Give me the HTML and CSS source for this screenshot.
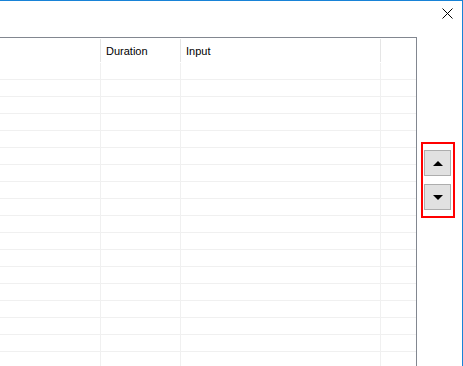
FILE: index.html
```html
<!DOCTYPE html>
<html lang="en">
<head>
    <meta charset="UTF-8">
    <title>Steps</title>
    <link rel="stylesheet" href="styles.css">
</head>
<body>
    <div class="window">
        <div class="main">
            <div class="titlebar">
                <svg class="close" width="11" height="11" viewBox="0 0 11 11">
                    <path d="M0.5 0.5 L10.5 10.5 M10.5 0.5 L0.5 10.5" stroke="#000" stroke-width="1" fill="none"/>
                </svg>
            </div>
            <div class="content">
                <div class="grid">
                    <div class="head">
                        <div class="cell"></div>
                        <div class="cell">Duration</div>
                        <div class="cell">Input</div>
                        <div class="cell"></div>
                    </div>
                    <div class="row"><div></div><div></div><div></div><div></div></div>
                    <div class="row"><div></div><div></div><div></div><div></div></div>
                    <div class="row"><div></div><div></div><div></div><div></div></div>
                    <div class="row"><div></div><div></div><div></div><div></div></div>
                    <div class="row"><div></div><div></div><div></div><div></div></div>
                    <div class="row"><div></div><div></div><div></div><div></div></div>
                    <div class="row"><div></div><div></div><div></div><div></div></div>
                    <div class="row"><div></div><div></div><div></div><div></div></div>
                    <div class="row"><div></div><div></div><div></div><div></div></div>
                    <div class="row"><div></div><div></div><div></div><div></div></div>
                    <div class="row"><div></div><div></div><div></div><div></div></div>
                    <div class="row"><div></div><div></div><div></div><div></div></div>
                    <div class="row"><div></div><div></div><div></div><div></div></div>
                    <div class="row"><div></div><div></div><div></div><div></div></div>
                    <div class="row"><div></div><div></div><div></div><div></div></div>
                    <div class="row"><div></div><div></div><div></div><div></div></div>
                    <div class="row"><div></div><div></div><div></div><div></div></div>
                    <div class="row"><div></div><div></div><div></div><div></div></div>
                </div>
                <div class="side">
                    <div class="movers">
                        <button class="move"><span class="tri up"></span></button>
                        <button class="move"><span class="tri down"></span></button>
                    </div>
                </div>
            </div>
        </div>
    </div>
</body>
</html>
```

FILE: styles.css
```css
* {
    box-sizing: border-box;
}

body {
    margin: 0;
    background: #fff;
    font-family: 'Liberation Sans', Arial, sans-serif;
    font-size: 11px;
    color: #000;
    overflow: hidden;
}

.window {
    width: 463px;
    height: 366px;
    border-top: 1px solid #1883d7;
    border-right: 1px solid #1883d7;
    overflow: hidden;
}

.titlebar {
    height: 36px;
    display: flex;
    justify-content: flex-end;
    padding: 7px 9px 0 0;
}

.close {
    display: block;
}

.content {
    display: flex;
    height: 329px;
}

/* list view */
.grid {
    width: 417px;
    flex: none;
    border-top: 1px solid #828790;
    border-right: 1px solid #828790;
    overflow: hidden;
}

.head,
.row {
    display: grid;
    grid-template-columns: 101px 80px 200px 35px;
}

.head {
    height: 25px;
}

.head .cell {
    margin: 1px 0 1px;
    border-right: 1px solid #e5e5e5;
    padding: 6px 0 0 5px;
    white-space: nowrap;
}

.head .cell:last-child {
    border-right: none;
}

.row {
    height: 17px;
    border-bottom: 1px solid #f0f0f0;
}

.row div {
    border-right: 1px solid #f0f0f0;
}

.row div:last-child {
    border-right: none;
}

/* up / down buttons */
.side {
    flex: 1;
    padding: 105px 0 0 4px;
}

.movers {
    width: 34px;
    border: 2px solid #ff0000;
    padding: 6px 2px 6px 1px;
    display: flex;
    flex-direction: column;
    gap: 8px;
}

.move {
    width: 27px;
    height: 26px;
    margin: 0;
    padding: 0;
    background: #e1e1e1;
    border: 1px solid #adadad;
    display: flex;
    align-items: center;
    justify-content: center;
}

.tri {
    width: 0;
    height: 0;
    border-left: 5.5px solid transparent;
    border-right: 5.5px solid transparent;
}

.tri.up {
    border-bottom: 5px solid #000;
}

.tri.down {
    border-top: 5px solid #000;
}
```
